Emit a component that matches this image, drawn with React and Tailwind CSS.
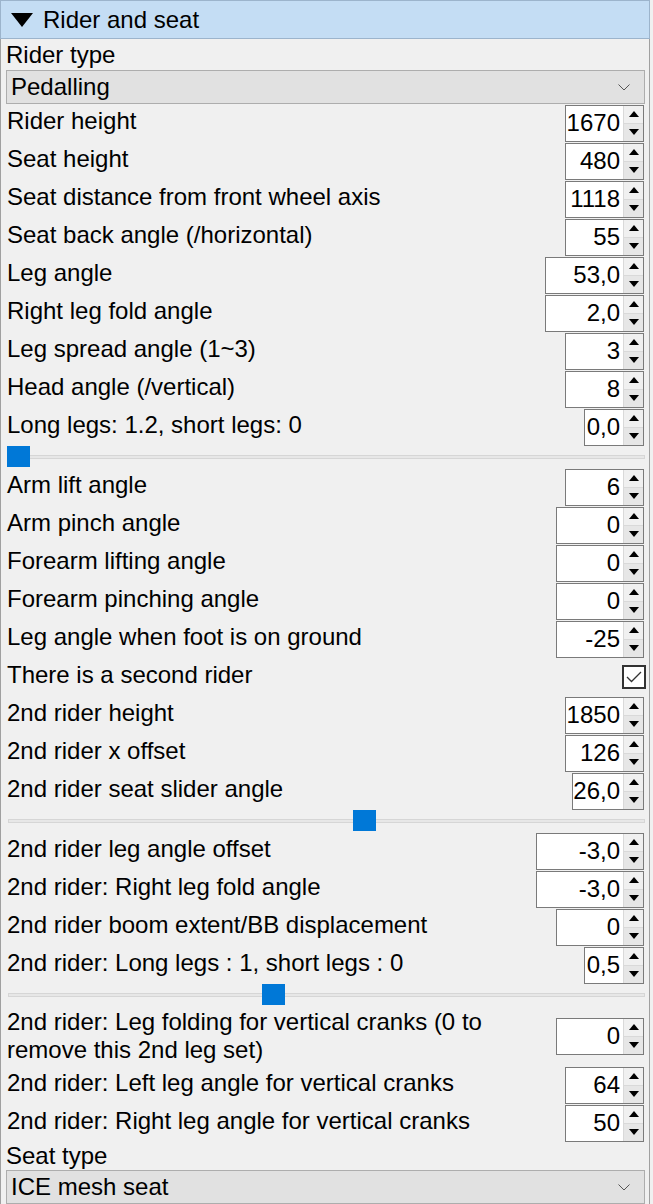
import React from 'react';

const font = { fontFamily: '"Liberation Sans", Arial, sans-serif' };

// spin box with up/down buttons
const SpinBox = ({ value, width }) => (
  <div className={`flex h-[37px] ${width} border border-[#7a7a7a] bg-white`}>
    <div className="flex flex-1 items-center justify-end pr-[3px] text-[24px] text-black">{value}</div>
    <div className="flex w-[20px] flex-col border-l border-[#d9d9d9]">
      <div className="flex flex-1 items-center justify-center bg-[#f0f0f0] border-b border-[#d9d9d9]">
        <svg width="10" height="6" viewBox="0 0 10 6"><path d="M0 6 L5 0 L10 6 Z" fill="#000" /></svg>
      </div>
      <div className="flex flex-1 items-center justify-center bg-[#e6e6e6]">
        <svg width="10" height="6" viewBox="0 0 10 6"><path d="M0 0 L5 6 L10 0 Z" fill="#000" /></svg>
      </div>
    </div>
  </div>
);

const Row = ({ label, value, width }) => (
  <div className="flex h-[38px] items-center justify-between pl-[6px] pr-[5px]">
    <span className="-mt-[4px] text-[24px] leading-none">{label}</span>
    <SpinBox value={value} width={width} />
  </div>
);

const Slider = ({ left }) => (
  <div className="relative h-[22px] ml-[6px] mr-[4px]">
    <div className="absolute left-[1px] right-0 top-[9px] h-[4px] border border-[#d6d6d6] bg-[#e7e7e7]" />
    <div className={`absolute top-0 h-[21px] w-[23px] bg-[#0078d7] ${left}`} />
  </div>
);

const Combo = ({ text }) => (
  <div className="ml-[5px] mr-[4px] flex h-[34px] items-center justify-between border border-[#adadad] bg-[#e1e1e1] pl-[4px] pr-[14px]">
    <span className="text-[24px] leading-none">{text}</span>
    <svg width="12" height="7" viewBox="0 0 12 7"><path d="M0.5 0.5 L6 6 L11.5 0.5" fill="none" stroke="#555" strokeWidth="1" /></svg>
  </div>
);

export default function App() {
  return (
    <div className="h-[1204px] w-[653px] overflow-hidden bg-[#f0f0f0] text-black" style={font}>
      <div className="flex h-[39px] w-[650px] items-center gap-[10px] border border-[#9cb4cc] bg-[#c4ddf4] pl-[10px]">
        <svg width="22" height="14" viewBox="0 0 22 14"><path d="M0 0 L22 0 L11 14 Z" fill="#000" /></svg>
        <span className="text-[24px] leading-none">Rider and seat</span>
      </div>
      <div className="h-[1165px] w-[650px] border-l border-r border-[#a0a0a0]">
        <div className="flex h-[31px] items-center pl-[5px] text-[24px] leading-none">Rider type</div>
        <Combo text="Pedalling" />
        <Row label="Rider height" value="1670" width="w-[79px]" />
        <Row label="Seat height" value="480" width="w-[79px]" />
        <Row label="Seat distance from front wheel axis" value="1118" width="w-[79px]" />
        <Row label="Seat back angle (/horizontal)" value="55" width="w-[79px]" />
        <Row label="Leg angle" value="53,0" width="w-[99px]" />
        <Row label="Right leg fold angle" value="2,0" width="w-[99px]" />
        <Row label="Leg spread angle (1~3)" value="3" width="w-[79px]" />
        <Row label="Head angle (/vertical)" value="8" width="w-[79px]" />
        <Row label="Long legs: 1.2, short legs: 0" value="0,0" width="w-[60px]" />
        <Slider left="left-0" />
        <Row label="Arm lift angle" value="6" width="w-[79px]" />
        <Row label="Arm pinch angle" value="0" width="w-[88px]" />
        <Row label="Forearm lifting angle" value="0" width="w-[88px]" />
        <Row label="Forearm pinching angle" value="0" width="w-[88px]" />
        <Row label="Leg angle when foot is on ground" value="-25" width="w-[88px]" />
        <div className="flex h-[38px] items-center justify-between pl-[6px] pr-[3px]">
          <span className="-mt-[4px] text-[24px] leading-none">There is a second rider</span>
          <div className="flex h-[24px] w-[24px] items-center justify-center border-2 border-[#333] bg-white">
            <svg width="16" height="12" viewBox="0 0 16 12"><path d="M1 6 L5.5 10.5 L15 1" fill="none" stroke="#333" strokeWidth="1.3" /></svg>
          </div>
        </div>
        <Row label="2nd rider height" value="1850" width="w-[79px]" />
        <Row label="2nd rider x offset" value="126" width="w-[79px]" />
        <Row label="2nd rider seat slider angle" value="26,0" width="w-[72px]" />
        <Slider left="left-[346px]" />
        <Row label="2nd rider leg angle offset" value="-3,0" width="w-[108px]" />
        <Row label="2nd rider: Right leg fold angle" value="-3,0" width="w-[108px]" />
        <Row label="2nd rider boom extent/BB displacement" value="0" width="w-[88px]" />
        <Row label="2nd rider: Long legs : 1, short legs : 0" value="0,5" width="w-[60px]" />
        <Slider left="left-[255px]" />
        <div className="flex h-[60px] items-center justify-between pl-[6px] pr-[5px]">
          <span className="text-[24px] leading-[28px]">2nd rider: Leg folding for vertical cranks (0 to<br />remove this 2nd leg set)</span>
          <SpinBox value="0" width="w-[88px]" />
        </div>
        <Row label="2nd rider: Left leg angle for vertical cranks" value="64" width="w-[79px]" />
        <Row label="2nd rider: Right leg angle for vertical cranks" value="50" width="w-[79px]" />
        <div className="flex h-[28px] items-center pl-[5px] text-[24px] leading-none">Seat type</div>
        <Combo text="ICE mesh seat" />
      </div>
    </div>
  );
}
